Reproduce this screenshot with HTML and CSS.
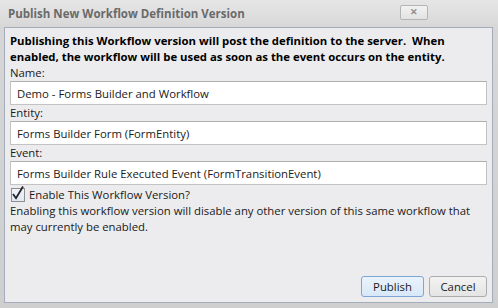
FILE: index.html
```html
<!DOCTYPE html>
<html lang="en">
<head>
  <meta charset="UTF-8" />
  <title>Publish New Workflow Definition Version</title>
  <link rel="stylesheet" href="styles.css">
</head>
<body>

  <div class="window">
    <div class="titlebar">
      <span class="title">Publish New Workflow Definition Version</span>
      <button class="close-btn">&#x2715;</button>
    </div>

    <div class="panel">
      <p class="notice">Publishing this Workflow version will post the definition to the server.&nbsp; When enabled, the workflow will be used as soon as the event occurs on the entity.</p>

      <label class="field-label">Name:</label>
      <input class="field" type="text" value="Demo - Forms Builder and Workflow">

      <label class="field-label">Entity:</label>
      <input class="field" type="text" value="Forms Builder Form (FormEntity)">

      <label class="field-label">Event:</label>
      <input class="field" type="text" value="Forms Builder Rule Executed Event (FormTransitionEvent)">

      <label class="check-row">
        <span class="check-box">
          <svg width="15" height="16" viewBox="0 0 15 16">
            <path d="M3 9 L6 13.2 L13 1.5" fill="none" stroke="#222" stroke-width="1.8"/>
          </svg>
        </span>
        Enable This Workflow Version?
      </label>
      <p class="hint">Enabling this workflow version will disable any other version of this same workflow that may currently be enabled.</p>

      <div class="actions">
        <button class="btn btn-default">Publish</button>
        <button class="btn">Cancel</button>
      </div>
    </div>
  </div>

</body>
</html>
```

FILE: styles.css
```css
body {
  margin: 0;
  font-family: 'Segoe UI', 'Open Sans', sans-serif;
  font-size: 11.35px;
  color: #1a1a1a;
}

.window {
  width: 498px;
  height: 308px;
  box-sizing: border-box;
  background: linear-gradient(#e6e6e6, #d6d6d6 30px, #cfcfcf);
  display: flex;
  flex-direction: column;
}

.titlebar {
  height: 27px;
  display: flex;
  align-items: center;
  justify-content: space-between;
  padding: 0 70px 0 8px;
}

.title {
  font-weight: bold;
  color: #6a6a6a;
  font-size: 11.5px;
}

.close-btn {
  width: 28px;
  height: 15px;
  margin-top: -3px;
  padding: 0;
  border: 1px solid #b4b4b4;
  border-radius: 2px;
  background: linear-gradient(#f2f2f2, #e2e2e2);
  color: #8c8c8c;
  font-size: 9px;
  font-weight: bold;
  line-height: 13px;
}

.panel {
  flex: 1;
  margin: 0 5px 5px 4px;
  border: 1px solid #a4adbb;
  background: #ececee;
  padding: 5px 5px 5px 5px;
  display: flex;
  flex-direction: column;
}

.notice {
  margin: 0;
  font-weight: bold;
  line-height: 16px;
  color: #000;
}

.field-label {
  line-height: 16px;
}

.field {
  height: 24px;
  box-sizing: border-box;
  border: 1px solid #c3c3c3;
  border-top-color: #b0b0b0;
  background: #fff;
  padding: 0 6px;
  font-family: inherit;
  font-size: 11.35px;
  color: #1a1a1a;
}

.check-row {
  display: flex;
  align-items: center;
  gap: 4px;
  height: 17px;
  margin-top: 1px;
}

.check-box {
  position: relative;
  width: 12px;
  height: 12px;
  border: 1px solid #8e8f8f;
  background: linear-gradient(#f0f4fa, #dfe8f4);
  margin-left: 1px;
}

.check-box svg {
  position: absolute;
  left: -2px;
  top: -4px;
}

.hint {
  margin: 0;
  line-height: 16px;
}

.actions {
  margin-top: auto;
  display: flex;
  justify-content: flex-end;
  gap: 5px;
}

.btn {
  width: 58px;
  height: 21px;
  border: 1px solid #acacac;
  border-radius: 3px;
  background: linear-gradient(#f3f3f3, #e4e4e4);
  font-family: inherit;
  font-size: 11.35px;
  color: #1a1a1a;
  padding: 0;
}

.btn-default {
  width: 63px;
  border-color: #7ea6d4;
  background: linear-gradient(#eaf3fb, #d8e8f8);
}
```
